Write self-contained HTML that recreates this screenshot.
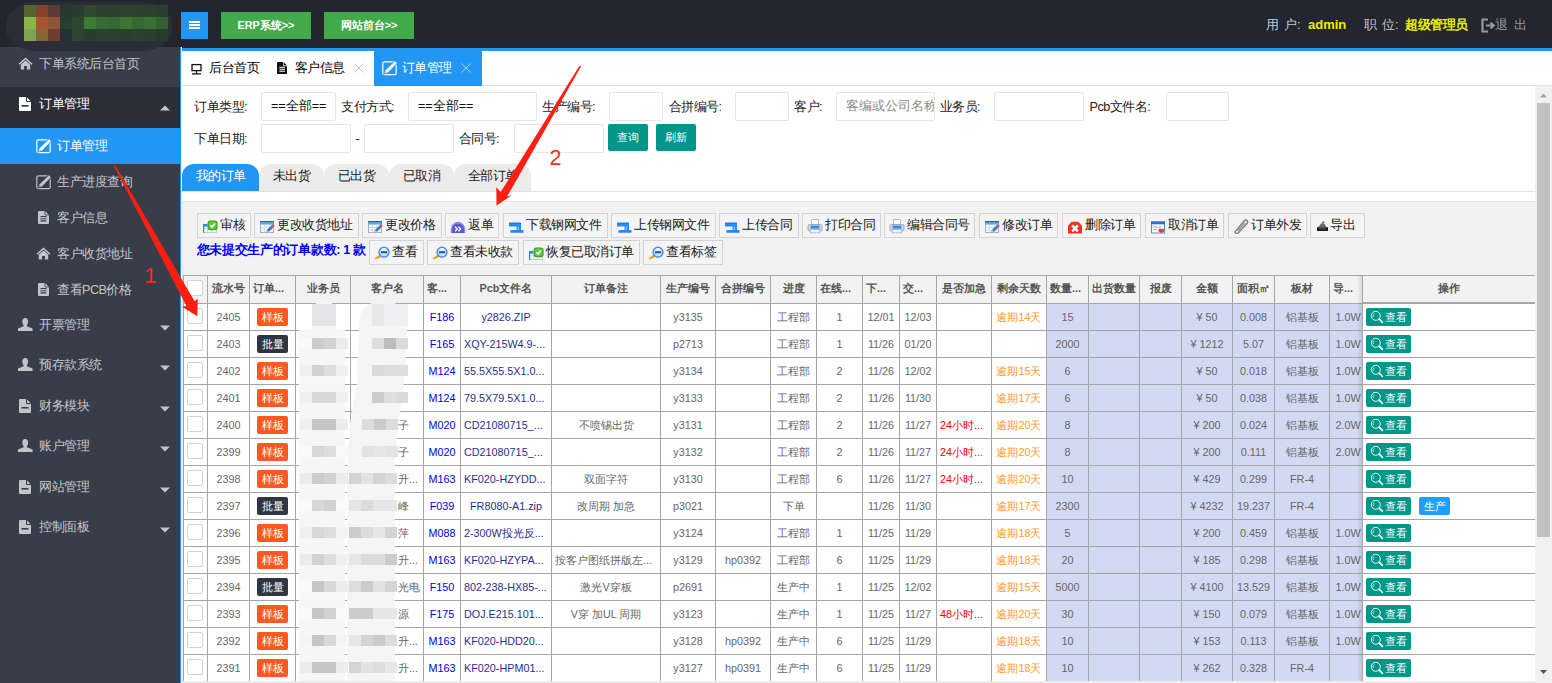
<!DOCTYPE html><html><head><meta charset="utf-8"><title>order</title><style>
*{box-sizing:border-box;margin:0;padding:0}
html,body{width:1552px;height:683px;overflow:hidden;background:#fff;font-family:"Liberation Sans", sans-serif;font-size:12.6px;color:#222}
.a{position:absolute}
.t{position:absolute;white-space:nowrap;overflow:hidden}
.c{position:absolute;white-space:nowrap;overflow:hidden;text-align:center;font-size:10.8px;color:#666}
.h{position:absolute;white-space:nowrap;overflow:hidden;text-align:center;font-size:10.8px;color:#555;font-weight:bold}
.vl{position:absolute;width:1px;background:#a6a6a6}
.hl{position:absolute;height:1px;background:#a6a6a6}
.inp{position:absolute;background:#fff;border:1px solid #e6e6e6;border-radius:2px}
.lbl{position:absolute;white-space:nowrap;letter-spacing:-0.5px;font-size:12.6px;color:#222;line-height:31px;height:30px}
.tb{position:absolute;letter-spacing:-0.5px;height:25px;border:1px solid #d3d3d3;background:#f4f4f4;white-space:nowrap;font-size:12.6px;line-height:22px;color:#222}
.tb span{position:absolute;top:0}
.st{position:absolute;letter-spacing:-0.5px;top:164px;height:27px;border-radius:12px 12px 0 0;background:#ebebeb;text-align:center;line-height:25px;font-size:12.6px;color:#222}
.bd{position:absolute;height:18px;width:31px;border-radius:2px;color:#fff;font-size:10.8px;line-height:18px;text-align:center}
.ck{position:absolute;width:16px;height:16px;border:1px solid #d2d2d2;border-radius:2px;background:#fff}
.vb{position:absolute;height:18px;border-radius:2px;color:#fff;font-size:10.8px;line-height:18px}
.sm{position:absolute;white-space:nowrap;letter-spacing:-0.5px;font-size:12.6px;height:20px;line-height:20px}
</style></head><body>
<div class="a" style="left:0;top:0;width:1552px;height:47px;background:#23262e"></div>
<div class="a" style="left:0;top:47px;width:180px;height:636px;background:#393d49"></div>
<div class="a" style="left:6px;top:2px;width:166px;height:49px;border-radius:30px/22px;background:#2b2e39"></div>
<div class="a" style="left:24px;top:5px;width:12px;height:12px;background:#54652f"></div>
<div class="a" style="left:36px;top:5px;width:12px;height:12px;background:#86422e"></div>
<div class="a" style="left:48px;top:5px;width:12px;height:12px;background:#5e3a36"></div>
<div class="a" style="left:60px;top:5px;width:12px;height:12px;background:#26382f"></div>
<div class="a" style="left:72px;top:5px;width:12px;height:12px;background:#283e30"></div>
<div class="a" style="left:84px;top:5px;width:12px;height:12px;background:#2e4a30"></div>
<div class="a" style="left:96px;top:5px;width:12px;height:12px;background:#2a4230"></div>
<div class="a" style="left:108px;top:5px;width:12px;height:12px;background:#2a4230"></div>
<div class="a" style="left:120px;top:5px;width:12px;height:12px;background:#2b4430"></div>
<div class="a" style="left:132px;top:5px;width:12px;height:12px;background:#2a4230"></div>
<div class="a" style="left:144px;top:5px;width:12px;height:12px;background:#2a4230"></div>
<div class="a" style="left:156px;top:5px;width:12px;height:12px;background:#293f30"></div>
<div class="a" style="left:24px;top:17px;width:12px;height:12px;background:#8bb348"></div>
<div class="a" style="left:36px;top:17px;width:12px;height:12px;background:#a65434"></div>
<div class="a" style="left:48px;top:17px;width:12px;height:12px;background:#8f5538"></div>
<div class="a" style="left:60px;top:17px;width:12px;height:12px;background:#283e30"></div>
<div class="a" style="left:72px;top:17px;width:12px;height:12px;background:#2c4630"></div>
<div class="a" style="left:84px;top:17px;width:12px;height:12px;background:#3e7c34"></div>
<div class="a" style="left:96px;top:17px;width:12px;height:12px;background:#386c34"></div>
<div class="a" style="left:108px;top:17px;width:12px;height:12px;background:#366834"></div>
<div class="a" style="left:120px;top:17px;width:12px;height:12px;background:#3c7434"></div>
<div class="a" style="left:132px;top:17px;width:12px;height:12px;background:#366834"></div>
<div class="a" style="left:144px;top:17px;width:12px;height:12px;background:#3a7034"></div>
<div class="a" style="left:156px;top:17px;width:12px;height:12px;background:#346032"></div>
<div class="a" style="left:24px;top:29px;width:12px;height:12px;background:#7ea652"></div>
<div class="a" style="left:36px;top:29px;width:12px;height:12px;background:#866838"></div>
<div class="a" style="left:48px;top:29px;width:12px;height:12px;background:#6e3e30"></div>
<div class="a" style="left:60px;top:29px;width:12px;height:12px;background:#243230"></div>
<div class="a" style="left:72px;top:29px;width:12px;height:12px;background:#2c4430"></div>
<div class="a" style="left:84px;top:29px;width:12px;height:12px;background:#283e30"></div>
<div class="a" style="left:96px;top:29px;width:12px;height:12px;background:#2a4230"></div>
<div class="a" style="left:108px;top:29px;width:12px;height:12px;background:#2a4230"></div>
<div class="a" style="left:120px;top:29px;width:12px;height:12px;background:#294030"></div>
<div class="a" style="left:132px;top:29px;width:12px;height:12px;background:#2a4230"></div>
<div class="a" style="left:144px;top:29px;width:12px;height:12px;background:#293f30"></div>
<div class="a" style="left:156px;top:29px;width:12px;height:12px;background:#283a30"></div>
<div class="a" style="left:181px;top:12px;width:27px;height:27px;background:#2296f1"></div>
<div class="a" style="left:189px;top:21px;width:11px;height:2px;background:#fff"></div>
<div class="a" style="left:189px;top:24px;width:11px;height:2px;background:#fff"></div>
<div class="a" style="left:189px;top:27px;width:11px;height:2px;background:#fff"></div>
<div class="a" style="left:221px;top:12px;width:90px;height:27px;background:#43aa4b;color:#fff;font-weight:bold;font-size:10.8px;line-height:27px;text-align:center">ERP系统&gt;&gt;</div>
<div class="a" style="left:324px;top:12px;width:90px;height:27px;background:#43aa4b;color:#fff;font-weight:bold;font-size:10.8px;line-height:27px;text-align:center">网站前台&gt;&gt;</div>
<div class="t" style="left:1266px;top:15px;height:20px;line-height:20px;font-size:13px;color:#c9c9c9;letter-spacing:0.5px">用 户:</div>
<div class="t" style="left:1308px;top:15px;height:20px;line-height:20px;font-size:13px;color:#eeee00;font-weight:bold">admin</div>
<div class="t" style="left:1364px;top:15px;height:20px;line-height:20px;font-size:13px;color:#c9c9c9;letter-spacing:0.5px">职 位:</div>
<div class="t" style="left:1405px;top:15px;height:20px;line-height:20px;font-size:12.6px;letter-spacing:-0.4px;color:#eeee00;font-weight:bold">超级管理员</div>
<svg class="a" style="left:1481px;top:18px" width="15" height="15" viewBox="0 0 15 15"><path d="M7 1.5H1.5V13.5H7" fill="none" stroke="#999" stroke-width="2.2"/><path d="M5 7.5H12M9.5 4.5L12.8 7.5L9.5 10.5" fill="none" stroke="#999" stroke-width="2"/></svg>
<div class="t" style="left:1495px;top:15px;height:20px;line-height:20px;font-size:13px;color:#999;letter-spacing:1px">退 出</div>
<div class="a" style="left:182px;top:47px;width:1370px;height:4px;background:linear-gradient(to bottom,#23262e 0,#23262e 0.7px,#2196F3 0.7px,#2196F3 3.7px,#fff 3.7px)"></div>
<div class="a" style="left:180px;top:47px;width:1px;height:636px;background:#2196F3"></div>
<svg class="a" style="left:18px;top:57px" width="15" height="13" viewBox="0 0 15 13"><path d="M7.5 0.5L0.5 6.8L1.6 7.8L7.5 2.6L13.4 7.8L14.5 6.8Z" fill="#c3c4c8"/><path d="M2.8 7.6L7.5 3.6L12.2 7.6V12.5H8.9V9H6.1V12.5H2.8Z" fill="#c3c4c8"/></svg>
<div class="sm" style="left:39px;top:54px;color:#c3c4c8">下单系统后台首页</div>
<div class="a" style="left:0;top:87px;width:180px;height:41px;background:#2c2f38"></div>
<svg class="a" style="left:19px;top:97px" width="12" height="14" viewBox="0 0 12 14"><path d="M1 0H7.5L12 4.5V13Q12 14 11 14H1Q0 14 0 13V1Q0 0 1 0Z" fill="#fff"/><path d="M7.5 0V4.5H12" fill="none" stroke="#2c2f38" stroke-width="1"/><rect x="2.5" y="8" width="7" height="1.6" fill="#2c2f38"/></svg>
<div class="sm" style="left:39px;top:94px;color:#fff">订单管理</div>
<svg class="a" style="left:0;top:0" width="180" height="683"><polygon points="160,110.5 170,110.5 165,105.5" fill="#c9c9cc"/></svg>
<div class="a" style="left:0;top:128px;width:180px;height:36px;background:#2196F3"></div>
<svg class="a" style="left:36px;top:139px" width="16" height="15" viewBox="0 0 16 15"><rect x="0.8" y="0.9" width="13.4" height="12.8" rx="1.6" fill="none" stroke="#fff" stroke-width="1.2"/><path d="M12.9 0.2L15 2.3L5.6 11.7L2.5 12.6L3.4 9.6Z" fill="#2196F3" stroke="#2196F3" stroke-width="1.6"/><path d="M12.9 0.2L15 2.3L5.6 11.7L2.5 12.6L3.4 9.6Z" fill="#fff"/><circle cx="4" cy="11" r="0.6" fill="#2196F3"/></svg>
<div class="sm" style="left:57px;top:136px;color:#fff">订单管理</div>
<svg class="a" style="left:36px;top:175px" width="16" height="15" viewBox="0 0 16 15"><rect x="0.8" y="0.9" width="13.4" height="12.8" rx="1.6" fill="none" stroke="#c3c4c8" stroke-width="1.2"/><path d="M12.9 0.2L15 2.3L5.6 11.7L2.5 12.6L3.4 9.6Z" fill="#393d49" stroke="#393d49" stroke-width="1.6"/><path d="M12.9 0.2L15 2.3L5.6 11.7L2.5 12.6L3.4 9.6Z" fill="#c3c4c8"/><circle cx="4" cy="11" r="0.6" fill="#393d49"/></svg>
<div class="sm" style="left:57px;top:172px;color:#c3c4c8">生产进度查询</div>
<svg class="a" style="left:38px;top:211px" width="11" height="13" viewBox="0 0 11 13"><path d="M1 0H7L11 4V12Q11 13 10 13H1Q0 13 0 12V1Q0 0 1 0Z" fill="#c3c4c8"/><path d="M2.5 5.5H8.5M2.5 7.7H8.5M2.5 9.9H8.5" stroke="#393d49" stroke-width="1.1"/><path d="M7 0V4H11" fill="none" stroke="#393d49" stroke-width="0.8"/></svg>
<div class="sm" style="left:57px;top:208px;color:#c3c4c8">客户信息</div>
<svg class="a" style="left:36px;top:247px" width="15" height="13" viewBox="0 0 15 13"><path d="M7.5 0.5L0.5 6.8L1.6 7.8L7.5 2.6L13.4 7.8L14.5 6.8Z" fill="#c3c4c8"/><path d="M2.8 7.6L7.5 3.6L12.2 7.6V12.5H8.9V9H6.1V12.5H2.8Z" fill="#c3c4c8"/></svg>
<div class="sm" style="left:57px;top:244px;color:#c3c4c8">客户收货地址</div>
<svg class="a" style="left:38px;top:283px" width="11" height="13" viewBox="0 0 11 13"><path d="M1 0H7L11 4V12Q11 13 10 13H1Q0 13 0 12V1Q0 0 1 0Z" fill="#c3c4c8"/><path d="M2.5 5.5H8.5M2.5 7.7H8.5M2.5 9.9H8.5" stroke="#393d49" stroke-width="1.1"/><path d="M7 0V4H11" fill="none" stroke="#393d49" stroke-width="0.8"/></svg>
<div class="sm" style="left:57px;top:280px;color:#c3c4c8">查看PCB价格</div>
<svg class="a" style="left:18px;top:318px" width="15" height="13" viewBox="0 0 15 13"><ellipse cx="7.2" cy="3.7" rx="2.9" ry="3.7" fill="#c3c4c8"/><path d="M5.6 6.2H8.8V8.2L14.6 10.6V13H-0.2V10.6L5.6 8.2Z" fill="#c3c4c8"/></svg>
<div class="sm" style="left:39px;top:315px;color:#c3c4c8">开票管理</div>
<svg class="a" style="left:0;top:0" width="180" height="683"><polygon points="160,325.5 170,325.5 165,330.5" fill="#c3c4c8"/></svg>
<svg class="a" style="left:18px;top:358px" width="15" height="13" viewBox="0 0 15 13"><ellipse cx="7.2" cy="3.7" rx="2.9" ry="3.7" fill="#c3c4c8"/><path d="M5.6 6.2H8.8V8.2L14.6 10.6V13H-0.2V10.6L5.6 8.2Z" fill="#c3c4c8"/></svg>
<div class="sm" style="left:39px;top:355px;color:#c3c4c8">预存款系统</div>
<svg class="a" style="left:0;top:0" width="180" height="683"><polygon points="160,365.5 170,365.5 165,370.5" fill="#c3c4c8"/></svg>
<svg class="a" style="left:19px;top:399px" width="12" height="14" viewBox="0 0 12 14"><path d="M1 0H7.5L12 4.5V13Q12 14 11 14H1Q0 14 0 13V1Q0 0 1 0Z" fill="#c3c4c8"/><path d="M7.5 0V4.5H12" fill="none" stroke="#393d49" stroke-width="1"/><rect x="2.5" y="8" width="7" height="1.6" fill="#393d49"/></svg>
<div class="sm" style="left:39px;top:396px;color:#c3c4c8">财务模块</div>
<svg class="a" style="left:0;top:0" width="180" height="683"><polygon points="160,406.5 170,406.5 165,411.5" fill="#c3c4c8"/></svg>
<svg class="a" style="left:18px;top:439px" width="15" height="13" viewBox="0 0 15 13"><ellipse cx="7.2" cy="3.7" rx="2.9" ry="3.7" fill="#c3c4c8"/><path d="M5.6 6.2H8.8V8.2L14.6 10.6V13H-0.2V10.6L5.6 8.2Z" fill="#c3c4c8"/></svg>
<div class="sm" style="left:39px;top:436px;color:#c3c4c8">账户管理</div>
<svg class="a" style="left:0;top:0" width="180" height="683"><polygon points="160,446.5 170,446.5 165,451.5" fill="#c3c4c8"/></svg>
<svg class="a" style="left:19px;top:480px" width="12" height="14" viewBox="0 0 12 14"><path d="M1 0H7.5L12 4.5V13Q12 14 11 14H1Q0 14 0 13V1Q0 0 1 0Z" fill="#c3c4c8"/><path d="M7.5 0V4.5H12" fill="none" stroke="#393d49" stroke-width="1"/><rect x="2.5" y="8" width="7" height="1.6" fill="#393d49"/></svg>
<div class="sm" style="left:39px;top:477px;color:#c3c4c8">网站管理</div>
<svg class="a" style="left:0;top:0" width="180" height="683"><polygon points="160,487.5 170,487.5 165,492.5" fill="#c3c4c8"/></svg>
<svg class="a" style="left:19px;top:520px" width="12" height="14" viewBox="0 0 12 14"><path d="M1 0H7.5L12 4.5V13Q12 14 11 14H1Q0 14 0 13V1Q0 0 1 0Z" fill="#c3c4c8"/><path d="M7.5 0V4.5H12" fill="none" stroke="#393d49" stroke-width="1"/><rect x="2.5" y="8" width="7" height="1.6" fill="#393d49"/></svg>
<div class="sm" style="left:39px;top:517px;color:#c3c4c8">控制面板</div>
<svg class="a" style="left:0;top:0" width="180" height="683"><polygon points="160,527.5 170,527.5 165,532.5" fill="#c3c4c8"/></svg>
<div class="a" style="left:182px;top:85px;width:1370px;height:1px;background:#e2e2e2"></div>
<svg class="a" style="left:191px;top:63px" width="11" height="12" viewBox="0 0 11 12"><rect x="1" y="1.6" width="9" height="6" fill="none" stroke="#111" stroke-width="1.3"/><path d="M5.5 8V10.5M1 10.8H10" stroke="#111" stroke-width="1.3"/></svg>
<div class="sm" style="left:209px;top:58px;color:#000">后台首页</div>
<svg class="a" style="left:277px;top:62px" width="10.4" height="12.2" viewBox="0 0 11 13"><path d="M1 0H7L11 4V12Q11 13 10 13H1Q0 13 0 12V1Q0 0 1 0Z" fill="#111"/><path d="M2.5 5.5H8.5M2.5 7.7H8.5M2.5 9.9H8.5" stroke="#fff" stroke-width="1.1"/><path d="M7 0V4H11" fill="none" stroke="#fff" stroke-width="0.8"/></svg>
<div class="sm" style="left:294.5px;top:58px;color:#000">客户信息</div>
<svg class="a" style="left:354px;top:63px" width="10" height="10" viewBox="0 0 10 10"><path d="M0.5 0.5L9.5 9.5M9.5 0.5L0.5 9.5" stroke="#c2c2c2" stroke-width="1"/></svg>
<div class="a" style="left:374px;top:50px;width:108px;height:36px;background:#2196F3"></div>
<svg class="a" style="left:382px;top:61px" width="16" height="15" viewBox="0 0 16 15"><rect x="0.8" y="0.9" width="13.4" height="12.8" rx="1.6" fill="none" stroke="#fff" stroke-width="1.2"/><path d="M12.9 0.2L15 2.3L5.6 11.7L2.5 12.6L3.4 9.6Z" fill="#2196F3" stroke="#2196F3" stroke-width="1.6"/><path d="M12.9 0.2L15 2.3L5.6 11.7L2.5 12.6L3.4 9.6Z" fill="#fff"/><circle cx="4" cy="11" r="0.6" fill="#2196F3"/></svg>
<div class="sm" style="left:401.5px;top:58px;color:#fff">订单管理</div>
<svg class="a" style="left:461px;top:63px" width="10" height="10" viewBox="0 0 10 10"><path d="M0.5 0.5L9.5 9.5M9.5 0.5L0.5 9.5" stroke="#a8d4fa" stroke-width="1"/></svg>
<div class="a" style="left:1535px;top:86px;width:17px;height:597px;background:#f1f1f1"></div>
<div class="a" style="left:1537px;top:103px;width:13px;height:434px;background:#c1c1c1"></div>
<svg class="a" style="left:1535px;top:86px" width="17" height="597"><polygon points="5,11.5 12,11.5 8.5,7.5" fill="#a3a3a3"/><polygon points="5,584 12,584 8.5,588" fill="#505050"/></svg>
<div class="lbl" style="left:194px;top:92px">订单类型:</div>
<div class="inp" style="left:261px;top:92px;width:75px;height:29px;line-height:27px;padding-left:9px;font-size:12.6px;color:#111;white-space:nowrap;overflow:hidden">==全部==</div>
<div class="lbl" style="left:341px;top:92px">支付方式:</div>
<div class="inp" style="left:408px;top:92px;width:129px;height:29px;line-height:27px;padding-left:9px;font-size:12.6px;color:#111;white-space:nowrap;overflow:hidden">==全部==</div>
<div class="lbl" style="left:542px;top:92px">生产编号:</div>
<div class="inp" style="left:609px;top:92px;width:54px;height:29px"></div>
<div class="lbl" style="left:668.5px;top:92px">合拼编号:</div>
<div class="inp" style="left:735px;top:92px;width:54px;height:29px"></div>
<div class="lbl" style="left:794px;top:92px">客户:</div>
<div class="inp" style="left:836px;top:92px;width:99px;height:29px;line-height:27px;padding-left:9px;font-size:12.6px;color:#8a8a8a;white-space:nowrap;overflow:hidden">客编或公司名称</div>
<div class="lbl" style="left:939.5px;top:92px">业务员:</div>
<div class="inp" style="left:994px;top:92px;width:90px;height:29px"></div>
<div class="lbl" style="left:1089.5px;top:92px">Pcb文件名:</div>
<div class="inp" style="left:1166px;top:92px;width:63px;height:29px"></div>
<div class="lbl" style="left:194px;top:124px">下单日期:</div>
<div class="inp" style="left:261px;top:124px;width:90px;height:29px"></div>
<div class="lbl" style="left:355.5px;top:124px">-</div>
<div class="inp" style="left:364px;top:124px;width:90px;height:29px"></div>
<div class="lbl" style="left:458.5px;top:124px">合同号:</div>
<div class="inp" style="left:514px;top:124px;width:90px;height:29px"></div>
<div class="a" style="left:608px;top:124px;width:40px;height:27px;background:#009688;border-radius:2px;color:#fff;font-size:10.8px;line-height:27px;text-align:center">查询</div>
<div class="a" style="left:656px;top:124px;width:40px;height:27px;background:#009688;border-radius:2px;color:#fff;font-size:10.8px;line-height:27px;text-align:center">刷新</div>
<div class="a" style="left:182px;top:191px;width:1353px;height:1px;background:#e2e2e2"></div>
<div class="st" style="left:182px;width:77px;background:#2196F3;color:#fff">我的订单</div>
<div class="st" style="left:259.4px;width:64.5px;">未出货</div>
<div class="st" style="left:324.3px;width:64.5px;">已出货</div>
<div class="st" style="left:389.2px;width:64.5px;">已取消</div>
<div class="st" style="left:454.1px;width:77px;">全部订单</div>
<div class="a" style="left:182px;top:201px;width:1353px;height:482px;background:#f2f2f2;border-top:1px solid #e3e3e3;border-left:1px solid #e6e6e6"></div>
<div class="tb" style="left:197px;top:213px;width:54px"><div class="a" style="left:4px;top:4px;width:16px;height:16px"><svg width="16" height="16" viewBox="0 0 16 16"><rect x="1.5" y="6.5" width="13" height="8" fill="#fbfcfe" stroke="#c3ccd9" stroke-width="1"/><path d="M1.5 10.5H14.5M5.5 8V14.5M10 8V14.5" stroke="#d3dae5" stroke-width="1"/><rect x="1" y="6" width="4.5" height="2.6" fill="#2f86e6"/><rect x="1" y="6" width="1.2" height="9" fill="#3f7fd0"/><rect x="5.6" y="2.6" width="10" height="9.6" rx="2.6" fill="#3ba628"/><rect x="6.8" y="3.6" width="7.6" height="7.4" rx="2" fill="#63c83c"/><path d="M8.4 7.3L10 9L13 5.4" fill="none" stroke="#fff" stroke-width="1.5"/></svg></div><span style="left:22px">审核</span></div>
<div class="tb" style="left:254px;top:213px;width:105px"><div class="a" style="left:4px;top:4px;width:16px;height:16px"><svg width="16" height="16" viewBox="0 0 16 16"><rect x="1.5" y="3.5" width="13" height="11" fill="#fff" stroke="#9fb0c8" stroke-width="1"/><rect x="1" y="3" width="14" height="1.6" fill="#1f5fc4"/><rect x="1" y="4.6" width="14" height="2" fill="#59a5f2"/><path d="M2 9.5H14.5M2 12H14.5M5.5 6.6V14.5M10 6.6V14.5" stroke="#d0d8e4" stroke-width="1"/><path d="M7.2 14.6L8 11.8L12.6 7.2L14.6 9.2L10 13.8Z" fill="#3a78d8"/><path d="M12.6 7.2L13.8 6L15.8 8L14.6 9.2Z" fill="#e8433a"/><path d="M7.2 14.6L8 11.8L10 13.8Z" fill="#f0c070"/></svg></div><span style="left:22px">更改收货地址</span></div>
<div class="tb" style="left:362px;top:213px;width:80px"><div class="a" style="left:4px;top:4px;width:16px;height:16px"><svg width="16" height="16" viewBox="0 0 16 16"><rect x="1.5" y="3.5" width="13" height="11" fill="#fff" stroke="#9fb0c8" stroke-width="1"/><rect x="1" y="3" width="14" height="1.6" fill="#1f5fc4"/><rect x="1" y="4.6" width="14" height="2" fill="#59a5f2"/><path d="M2 9.5H14.5M2 12H14.5M5.5 6.6V14.5M10 6.6V14.5" stroke="#d0d8e4" stroke-width="1"/><path d="M7.2 14.6L8 11.8L12.6 7.2L14.6 9.2L10 13.8Z" fill="#3a78d8"/><path d="M12.6 7.2L13.8 6L15.8 8L14.6 9.2Z" fill="#e8433a"/><path d="M7.2 14.6L8 11.8L10 13.8Z" fill="#f0c070"/></svg></div><span style="left:22px">更改价格</span></div>
<div class="tb" style="left:445px;top:213px;width:54px"><div class="a" style="left:4px;top:4px;width:16px;height:16px"><svg width="16" height="16" viewBox="0 0 16 16"><path d="M0.8 15V11A7.2 7.2 0 0 1 15.2 11V15Z" fill="#8c8cec"/><path d="M2.2 15V11.2A5.8 5.8 0 0 1 13.8 11.2V15Z" fill="#5a56cc"/><path d="M5 8.6L7.2 11L5 13.4M8.4 8.6L10.6 11L8.4 13.4" fill="none" stroke="#fff" stroke-width="1.4"/></svg></div><span style="left:22px">返单</span></div>
<div class="tb" style="left:503px;top:213px;width:105px"><div class="a" style="left:4px;top:4px;width:16px;height:16px"><svg width="16" height="16" viewBox="0 0 16 16"><path d="M1 4.7H13V12H15.4V14.5H2.6V12H8.5V8.4H1Z" fill="#1e90ff"/><path d="M1 4.7H13V5.7H1Z" fill="#1673e0"/><path d="M9.6 8.4H11V12H9.6Z" fill="#7cc0ff"/><path d="M2.6 13.6H15.4V14.5H2.6Z" fill="#2a7ae0"/></svg></div><span style="left:22px">下载钢网文件</span></div>
<div class="tb" style="left:611px;top:213px;width:105px"><div class="a" style="left:4px;top:4px;width:16px;height:16px"><svg width="16" height="16" viewBox="0 0 16 16"><path d="M1 4.7H13V12H15.4V14.5H2.6V12H8.5V8.4H1Z" fill="#1e90ff"/><path d="M1 4.7H13V5.7H1Z" fill="#1673e0"/><path d="M9.6 8.4H11V12H9.6Z" fill="#7cc0ff"/><path d="M2.6 13.6H15.4V14.5H2.6Z" fill="#2a7ae0"/></svg></div><span style="left:22px">上传钢网文件</span></div>
<div class="tb" style="left:719px;top:213px;width:80px"><div class="a" style="left:4px;top:4px;width:16px;height:16px"><svg width="16" height="16" viewBox="0 0 16 16"><path d="M1 4.7H13V12H15.4V14.5H2.6V12H8.5V8.4H1Z" fill="#1e90ff"/><path d="M1 4.7H13V5.7H1Z" fill="#1673e0"/><path d="M9.6 8.4H11V12H9.6Z" fill="#7cc0ff"/><path d="M2.6 13.6H15.4V14.5H2.6Z" fill="#2a7ae0"/></svg></div><span style="left:22px">上传合同</span></div>
<div class="tb" style="left:802px;top:213px;width:79px"><div class="a" style="left:4px;top:4px;width:16px;height:16px"><svg width="16" height="16" viewBox="0 0 16 16"><rect x="4.5" y="1.5" width="7" height="6" fill="#fff" stroke="#b4b8c0" stroke-width="1"/><rect x="1" y="6.5" width="14" height="6.5" rx="1.6" fill="#d3d8e2" stroke="#a2a8b4" stroke-width="1"/><rect x="3.6" y="7.6" width="8.8" height="3" fill="#1e90ff"/><rect x="3.2" y="11.4" width="9.6" height="3.4" fill="#f4f5f8" stroke="#a8adb8" stroke-width="0.8"/></svg></div><span style="left:22px">打印合同</span></div>
<div class="tb" style="left:884px;top:213px;width:91px"><div class="a" style="left:4px;top:4px;width:16px;height:16px"><svg width="16" height="16" viewBox="0 0 16 16"><rect x="4.5" y="1.5" width="7" height="6" fill="#fff" stroke="#b4b8c0" stroke-width="1"/><rect x="1" y="6.5" width="14" height="6.5" rx="1.6" fill="#d3d8e2" stroke="#a2a8b4" stroke-width="1"/><rect x="3.6" y="7.6" width="8.8" height="3" fill="#1e90ff"/><rect x="3.2" y="11.4" width="9.6" height="3.4" fill="#f4f5f8" stroke="#a8adb8" stroke-width="0.8"/></svg></div><span style="left:22px">编辑合同号</span></div>
<div class="tb" style="left:979px;top:213px;width:79px"><div class="a" style="left:4px;top:4px;width:16px;height:16px"><svg width="16" height="16" viewBox="0 0 16 16"><rect x="1.5" y="3.5" width="13" height="11" fill="#fff" stroke="#9fb0c8" stroke-width="1"/><rect x="1" y="3" width="14" height="1.6" fill="#1f5fc4"/><rect x="1" y="4.6" width="14" height="2" fill="#59a5f2"/><path d="M2 9.5H14.5M2 12H14.5M5.5 6.6V14.5M10 6.6V14.5" stroke="#d0d8e4" stroke-width="1"/><path d="M7.2 14.6L8 11.8L12.6 7.2L14.6 9.2L10 13.8Z" fill="#3a78d8"/><path d="M12.6 7.2L13.8 6L15.8 8L14.6 9.2Z" fill="#e8433a"/><path d="M7.2 14.6L8 11.8L10 13.8Z" fill="#f0c070"/></svg></div><span style="left:22px">修改订单</span></div>
<div class="tb" style="left:1062px;top:213px;width:79px"><div class="a" style="left:4px;top:4px;width:16px;height:16px"><svg width="16" height="16" viewBox="0 0 16 16"><path d="M1 15.5V8L4.5 3.8H11.5L15 8V15.5Z" fill="#ea3420"/><path d="M5.2 7.4L10.8 13.4M10.8 7.4L5.2 13.4" stroke="#fff" stroke-width="2.3"/></svg></div><span style="left:22px">删除订单</span></div>
<div class="tb" style="left:1145px;top:213px;width:79px"><div class="a" style="left:4px;top:4px;width:16px;height:16px"><svg width="16" height="16" viewBox="0 0 16 16"><rect x="1.5" y="4" width="13" height="11" fill="#f6f9ff" stroke="#5f86c8" stroke-width="1"/><rect x="1" y="3.5" width="14" height="2.8" fill="#2f6fd0"/><path d="M3.5 9H7M3.5 11.5H6.5M8.5 9H11" stroke="#8fa2c4" stroke-width="1.2"/><path d="M8.6 11.4Q10 9.8 11.3 11.4Q12.6 9.8 14 11.4Q15 13.4 11.3 15Q7.6 13.4 8.6 11.4Z" fill="#e8402c"/></svg></div><span style="left:22px">取消订单</span></div>
<div class="tb" style="left:1228px;top:213px;width:79px"><div class="a" style="left:4px;top:4px;width:16px;height:16px"><svg width="16" height="16" viewBox="0 0 16 16"><path d="M2.2 13.6L11.4 2.6Q12.8 1.4 14.2 2.8Q15.2 4.2 14 5.6L5 15Q3.6 15.8 2.6 14.8Q1.8 14 2.2 13.6Z" fill="none" stroke="#7c7c86" stroke-width="1.4"/><path d="M4.6 12.8L12 4.6M6.4 13.6L13.4 6" stroke="#8a8a94" stroke-width="1.3"/></svg></div><span style="left:22px">订单外发</span></div>
<div class="tb" style="left:1310px;top:213px;width:55px"><div class="a" style="left:5px;top:6px;width:16px;height:16px"><svg width="16" height="16" viewBox="0 0 16 16"><rect x="1" y="7.2" width="11" height="3.8" fill="#1c1c1c"/><path d="M2.2 7.2L5 3.6H8.4L10.6 7.2Z" fill="#6a6a6a"/><path d="M6 3.4L8.2 1.6" stroke="#d8402c" stroke-width="1.4"/><rect x="3" y="8.4" width="7" height="1" fill="#555"/></svg></div><span style="left:19px">导出</span></div>
<div class="t" style="left:196.5px;top:240px;height:25px;line-height:21px;font-size:12.6px;letter-spacing:-0.3px;font-weight:bold;color:#0000ff">您未提交生产的订单款数: 1 款</div>
<div class="tb" style="left:369px;top:240px;width:55px"><div class="a" style="left:4px;top:4px;width:16px;height:16px"><svg width="16" height="16" viewBox="0 0 16 16"><path d="M0.6 13.4L6 9.2L7.8 11.8L1.6 14.6Z" fill="#dca41e"/><path d="M0.8 13.3L6 9.4" stroke="#f2cc58" stroke-width="0.9"/><circle cx="10" cy="7.2" r="4.9" fill="#bfe2ff" stroke="#4f8ee0" stroke-width="1.5"/><circle cx="10" cy="5.6" r="2.6" fill="#e6f4ff"/><path d="M7 7.2H13" stroke="#1a44b0" stroke-width="1.9"/></svg></div><span style="left:22px">查看</span></div>
<div class="tb" style="left:427px;top:240px;width:92px"><div class="a" style="left:4px;top:4px;width:16px;height:16px"><svg width="16" height="16" viewBox="0 0 16 16"><path d="M0.6 13.4L6 9.2L7.8 11.8L1.6 14.6Z" fill="#dca41e"/><path d="M0.8 13.3L6 9.4" stroke="#f2cc58" stroke-width="0.9"/><circle cx="10" cy="7.2" r="4.9" fill="#bfe2ff" stroke="#4f8ee0" stroke-width="1.5"/><circle cx="10" cy="5.6" r="2.6" fill="#e6f4ff"/><path d="M7 7.2H13" stroke="#1a44b0" stroke-width="1.9"/></svg></div><span style="left:22px">查看未收款</span></div>
<div class="tb" style="left:523px;top:240px;width:117px"><div class="a" style="left:4px;top:4px;width:16px;height:16px"><svg width="16" height="16" viewBox="0 0 16 16"><rect x="1.5" y="6.5" width="13" height="8" fill="#fbfcfe" stroke="#c3ccd9" stroke-width="1"/><path d="M1.5 10.5H14.5M5.5 8V14.5M10 8V14.5" stroke="#d3dae5" stroke-width="1"/><rect x="1" y="6" width="4.5" height="2.6" fill="#2f86e6"/><rect x="1" y="6" width="1.2" height="9" fill="#3f7fd0"/><rect x="5.6" y="2.6" width="10" height="9.6" rx="2.6" fill="#3ba628"/><rect x="6.8" y="3.6" width="7.6" height="7.4" rx="2" fill="#63c83c"/><path d="M8.4 7.3L10 9L13 5.4" fill="none" stroke="#fff" stroke-width="1.5"/></svg></div><span style="left:22px">恢复已取消订单</span></div>
<div class="tb" style="left:643px;top:240px;width:80px"><div class="a" style="left:4px;top:4px;width:16px;height:16px"><svg width="16" height="16" viewBox="0 0 16 16"><path d="M0.6 13.4L6 9.2L7.8 11.8L1.6 14.6Z" fill="#dca41e"/><path d="M0.8 13.3L6 9.4" stroke="#f2cc58" stroke-width="0.9"/><circle cx="10" cy="7.2" r="4.9" fill="#bfe2ff" stroke="#4f8ee0" stroke-width="1.5"/><circle cx="10" cy="5.6" r="2.6" fill="#e6f4ff"/><path d="M7 7.2H13" stroke="#1a44b0" stroke-width="1.9"/></svg></div><span style="left:22px">查看标签</span></div>
<div class="a" style="left:183px;top:275px;width:1179px;height:28px;background:#f2f2f2"></div>
<div class="a" style="left:183px;top:303px;width:1179px;height:380px;background:#fff"></div>
<div class="a" style="left:1047px;top:304px;width:315px;height:380px;background:#d2d9f3"></div>
<div class="ck" style="left:187px;top:280px"></div>
<div class="h" style="left:208px;top:276px;width:41px;height:27px;line-height:25px;">流水号</div>
<div class="h" style="left:250px;top:276px;width:45px;height:27px;line-height:25px;text-align:left;padding-left:3px;">订单...</div>
<div class="h" style="left:296px;top:276px;width:54px;height:27px;line-height:25px;">业务员</div>
<div class="h" style="left:351px;top:276px;width:72px;height:27px;line-height:25px;">客户名</div>
<div class="h" style="left:424px;top:276px;width:36px;height:27px;line-height:25px;text-align:left;padding-left:3px;">客...</div>
<div class="h" style="left:461px;top:276px;width:90px;height:27px;line-height:25px;">Pcb文件名</div>
<div class="h" style="left:552px;top:276px;width:108px;height:27px;line-height:25px;">订单备注</div>
<div class="h" style="left:661px;top:276px;width:54px;height:27px;line-height:25px;">生产编号</div>
<div class="h" style="left:716px;top:276px;width:54px;height:27px;line-height:25px;">合拼编号</div>
<div class="h" style="left:771px;top:276px;width:45px;height:27px;line-height:25px;">进度</div>
<div class="h" style="left:817px;top:276px;width:45px;height:27px;line-height:25px;text-align:left;padding-left:3px;">在线...</div>
<div class="h" style="left:863px;top:276px;width:36px;height:27px;line-height:25px;text-align:left;padding-left:3px;">下...</div>
<div class="h" style="left:900px;top:276px;width:36px;height:27px;line-height:25px;text-align:left;padding-left:3px;">交...</div>
<div class="h" style="left:937px;top:276px;width:54px;height:27px;line-height:25px;">是否加急</div>
<div class="h" style="left:992px;top:276px;width:54px;height:27px;line-height:25px;">剩余天数</div>
<div class="h" style="left:1047px;top:276px;width:41px;height:27px;line-height:25px;text-align:left;padding-left:3px;">数量...</div>
<div class="h" style="left:1089px;top:276px;width:50px;height:27px;line-height:25px;">出货数量</div>
<div class="h" style="left:1140px;top:276px;width:41px;height:27px;line-height:25px;">报废</div>
<div class="h" style="left:1182px;top:276px;width:50px;height:27px;line-height:25px;">金额</div>
<div class="h" style="left:1233px;top:276px;width:41px;height:27px;line-height:25px;">面积㎡</div>
<div class="h" style="left:1275px;top:276px;width:54px;height:27px;line-height:25px;">板材</div>
<div class="h" style="left:1330px;top:276px;width:45px;height:27px;line-height:25px;text-align:left;padding-left:3px;">导...</div>
<div class="ck" style="left:187px;top:308px"></div>
<div class="c" style="left:208px;top:304px;width:41px;height:26px;line-height:27px;">2405</div>
<div class="bd" style="left:257px;top:308px;background:#ff5722">样板</div>
<div class="c" style="left:424px;top:304px;width:36px;height:26px;line-height:27px;color:#0000e0;">F186</div>
<div class="c" style="left:461px;top:304px;width:90px;height:26px;line-height:27px;color:#1f2f8f;">y2826.ZIP</div>
<div class="c" style="left:661px;top:304px;width:54px;height:26px;line-height:27px;">y3135</div>
<div class="c" style="left:771px;top:304px;width:45px;height:26px;line-height:27px;">工程部</div>
<div class="c" style="left:817px;top:304px;width:45px;height:26px;line-height:27px;">1</div>
<div class="c" style="left:863px;top:304px;width:36px;height:26px;line-height:27px;">12/01</div>
<div class="c" style="left:900px;top:304px;width:36px;height:26px;line-height:27px;">12/03</div>
<div class="c" style="left:992px;top:304px;width:54px;height:26px;line-height:27px;color:#ff9a1f;">逾期14天</div>
<div class="c" style="left:1047px;top:304px;width:41px;height:26px;line-height:27px;">15</div>
<div class="c" style="left:1182px;top:304px;width:50px;height:26px;line-height:27px;">¥ 50</div>
<div class="c" style="left:1233px;top:304px;width:41px;height:26px;line-height:27px;">0.008</div>
<div class="c" style="left:1275px;top:304px;width:54px;height:26px;line-height:27px;">铝基板</div>
<div class="c" style="left:1330px;top:304px;width:32px;height:26px;line-height:27px;text-align:left;padding-left:5.5px;">1.0W</div>
<div class="ck" style="left:187px;top:335px"></div>
<div class="c" style="left:208px;top:331px;width:41px;height:26px;line-height:27px;">2403</div>
<div class="bd" style="left:257px;top:335px;background:#2f3542">批量</div>
<div class="c" style="left:424px;top:331px;width:36px;height:26px;line-height:27px;color:#0000e0;">F165</div>
<div class="c" style="left:461px;top:331px;width:90px;height:26px;line-height:27px;color:#1f2f8f;text-align:left;padding-left:3px;">XQY-215W4.9-...</div>
<div class="c" style="left:661px;top:331px;width:54px;height:26px;line-height:27px;">p2713</div>
<div class="c" style="left:771px;top:331px;width:45px;height:26px;line-height:27px;">工程部</div>
<div class="c" style="left:817px;top:331px;width:45px;height:26px;line-height:27px;">1</div>
<div class="c" style="left:863px;top:331px;width:36px;height:26px;line-height:27px;">11/26</div>
<div class="c" style="left:900px;top:331px;width:36px;height:26px;line-height:27px;">01/20</div>
<div class="c" style="left:1047px;top:331px;width:41px;height:26px;line-height:27px;">2000</div>
<div class="c" style="left:1182px;top:331px;width:50px;height:26px;line-height:27px;">¥ 1212</div>
<div class="c" style="left:1233px;top:331px;width:41px;height:26px;line-height:27px;">5.07</div>
<div class="c" style="left:1275px;top:331px;width:54px;height:26px;line-height:27px;">铝基板</div>
<div class="c" style="left:1330px;top:331px;width:32px;height:26px;line-height:27px;text-align:left;padding-left:5.5px;">1.0W</div>
<div class="ck" style="left:187px;top:362px"></div>
<div class="c" style="left:208px;top:358px;width:41px;height:26px;line-height:27px;">2402</div>
<div class="bd" style="left:257px;top:362px;background:#ff5722">样板</div>
<div class="c" style="left:424px;top:358px;width:36px;height:26px;line-height:27px;color:#0000e0;">M124</div>
<div class="c" style="left:461px;top:358px;width:90px;height:26px;line-height:27px;color:#1f2f8f;text-align:left;padding-left:3px;">55.5X55.5X1.0...</div>
<div class="c" style="left:661px;top:358px;width:54px;height:26px;line-height:27px;">y3134</div>
<div class="c" style="left:771px;top:358px;width:45px;height:26px;line-height:27px;">工程部</div>
<div class="c" style="left:817px;top:358px;width:45px;height:26px;line-height:27px;">2</div>
<div class="c" style="left:863px;top:358px;width:36px;height:26px;line-height:27px;">11/26</div>
<div class="c" style="left:900px;top:358px;width:36px;height:26px;line-height:27px;">12/02</div>
<div class="c" style="left:992px;top:358px;width:54px;height:26px;line-height:27px;color:#ff9a1f;">逾期15天</div>
<div class="c" style="left:1047px;top:358px;width:41px;height:26px;line-height:27px;">6</div>
<div class="c" style="left:1182px;top:358px;width:50px;height:26px;line-height:27px;">¥ 50</div>
<div class="c" style="left:1233px;top:358px;width:41px;height:26px;line-height:27px;">0.018</div>
<div class="c" style="left:1275px;top:358px;width:54px;height:26px;line-height:27px;">铝基板</div>
<div class="c" style="left:1330px;top:358px;width:32px;height:26px;line-height:27px;text-align:left;padding-left:5.5px;">1.0W</div>
<div class="ck" style="left:187px;top:389px"></div>
<div class="c" style="left:208px;top:385px;width:41px;height:26px;line-height:27px;">2401</div>
<div class="bd" style="left:257px;top:389px;background:#ff5722">样板</div>
<div class="c" style="left:424px;top:385px;width:36px;height:26px;line-height:27px;color:#0000e0;">M124</div>
<div class="c" style="left:461px;top:385px;width:90px;height:26px;line-height:27px;color:#1f2f8f;text-align:left;padding-left:3px;">79.5X79.5X1.0...</div>
<div class="c" style="left:661px;top:385px;width:54px;height:26px;line-height:27px;">y3133</div>
<div class="c" style="left:771px;top:385px;width:45px;height:26px;line-height:27px;">工程部</div>
<div class="c" style="left:817px;top:385px;width:45px;height:26px;line-height:27px;">2</div>
<div class="c" style="left:863px;top:385px;width:36px;height:26px;line-height:27px;">11/26</div>
<div class="c" style="left:900px;top:385px;width:36px;height:26px;line-height:27px;">11/30</div>
<div class="c" style="left:992px;top:385px;width:54px;height:26px;line-height:27px;color:#ff9a1f;">逾期17天</div>
<div class="c" style="left:1047px;top:385px;width:41px;height:26px;line-height:27px;">6</div>
<div class="c" style="left:1182px;top:385px;width:50px;height:26px;line-height:27px;">¥ 50</div>
<div class="c" style="left:1233px;top:385px;width:41px;height:26px;line-height:27px;">0.038</div>
<div class="c" style="left:1275px;top:385px;width:54px;height:26px;line-height:27px;">铝基板</div>
<div class="c" style="left:1330px;top:385px;width:32px;height:26px;line-height:27px;text-align:left;padding-left:5.5px;">1.0W</div>
<div class="ck" style="left:187px;top:416px"></div>
<div class="c" style="left:208px;top:412px;width:41px;height:26px;line-height:27px;">2400</div>
<div class="bd" style="left:257px;top:416px;background:#ff5722">样板</div>
<div class="c" style="left:351px;top:412px;width:72px;height:26px;line-height:27px;text-align:left;padding-left:47px;">子</div>
<div class="c" style="left:424px;top:412px;width:36px;height:26px;line-height:27px;color:#0000e0;">M020</div>
<div class="c" style="left:461px;top:412px;width:90px;height:26px;line-height:27px;color:#1f2f8f;text-align:left;padding-left:3px;">CD21080715_...</div>
<div class="c" style="left:552px;top:412px;width:108px;height:26px;line-height:27px;">不喷锡出货</div>
<div class="c" style="left:661px;top:412px;width:54px;height:26px;line-height:27px;">y3131</div>
<div class="c" style="left:771px;top:412px;width:45px;height:26px;line-height:27px;">工程部</div>
<div class="c" style="left:817px;top:412px;width:45px;height:26px;line-height:27px;">2</div>
<div class="c" style="left:863px;top:412px;width:36px;height:26px;line-height:27px;">11/26</div>
<div class="c" style="left:900px;top:412px;width:36px;height:26px;line-height:27px;">11/27</div>
<div class="c" style="left:937px;top:412px;width:54px;height:26px;line-height:27px;color:#ff0000;text-align:left;padding-left:3px;">24小时...</div>
<div class="c" style="left:992px;top:412px;width:54px;height:26px;line-height:27px;color:#ff9a1f;">逾期20天</div>
<div class="c" style="left:1047px;top:412px;width:41px;height:26px;line-height:27px;">8</div>
<div class="c" style="left:1182px;top:412px;width:50px;height:26px;line-height:27px;">¥ 200</div>
<div class="c" style="left:1233px;top:412px;width:41px;height:26px;line-height:27px;">0.024</div>
<div class="c" style="left:1275px;top:412px;width:54px;height:26px;line-height:27px;">铝基板</div>
<div class="c" style="left:1330px;top:412px;width:32px;height:26px;line-height:27px;text-align:left;padding-left:5.5px;">2.0W</div>
<div class="ck" style="left:187px;top:443px"></div>
<div class="c" style="left:208px;top:439px;width:41px;height:26px;line-height:27px;">2399</div>
<div class="bd" style="left:257px;top:443px;background:#ff5722">样板</div>
<div class="c" style="left:351px;top:439px;width:72px;height:26px;line-height:27px;text-align:left;padding-left:47px;">子</div>
<div class="c" style="left:424px;top:439px;width:36px;height:26px;line-height:27px;color:#0000e0;">M020</div>
<div class="c" style="left:461px;top:439px;width:90px;height:26px;line-height:27px;color:#1f2f8f;text-align:left;padding-left:3px;">CD21080715_...</div>
<div class="c" style="left:661px;top:439px;width:54px;height:26px;line-height:27px;">y3132</div>
<div class="c" style="left:771px;top:439px;width:45px;height:26px;line-height:27px;">工程部</div>
<div class="c" style="left:817px;top:439px;width:45px;height:26px;line-height:27px;">2</div>
<div class="c" style="left:863px;top:439px;width:36px;height:26px;line-height:27px;">11/26</div>
<div class="c" style="left:900px;top:439px;width:36px;height:26px;line-height:27px;">11/27</div>
<div class="c" style="left:937px;top:439px;width:54px;height:26px;line-height:27px;color:#ff0000;text-align:left;padding-left:3px;">24小时...</div>
<div class="c" style="left:992px;top:439px;width:54px;height:26px;line-height:27px;color:#ff9a1f;">逾期20天</div>
<div class="c" style="left:1047px;top:439px;width:41px;height:26px;line-height:27px;">8</div>
<div class="c" style="left:1182px;top:439px;width:50px;height:26px;line-height:27px;">¥ 200</div>
<div class="c" style="left:1233px;top:439px;width:41px;height:26px;line-height:27px;">0.111</div>
<div class="c" style="left:1275px;top:439px;width:54px;height:26px;line-height:27px;">铝基板</div>
<div class="c" style="left:1330px;top:439px;width:32px;height:26px;line-height:27px;text-align:left;padding-left:5.5px;">2.0W</div>
<div class="ck" style="left:187px;top:470px"></div>
<div class="c" style="left:208px;top:466px;width:41px;height:26px;line-height:27px;">2398</div>
<div class="bd" style="left:257px;top:470px;background:#ff5722">样板</div>
<div class="c" style="left:351px;top:466px;width:72px;height:26px;line-height:27px;text-align:left;padding-left:47px;">升...</div>
<div class="c" style="left:424px;top:466px;width:36px;height:26px;line-height:27px;color:#0000e0;">M163</div>
<div class="c" style="left:461px;top:466px;width:90px;height:26px;line-height:27px;color:#1f2f8f;text-align:left;padding-left:3px;">KF020-HZYDD...</div>
<div class="c" style="left:552px;top:466px;width:108px;height:26px;line-height:27px;">双面字符</div>
<div class="c" style="left:661px;top:466px;width:54px;height:26px;line-height:27px;">y3130</div>
<div class="c" style="left:771px;top:466px;width:45px;height:26px;line-height:27px;">工程部</div>
<div class="c" style="left:817px;top:466px;width:45px;height:26px;line-height:27px;">6</div>
<div class="c" style="left:863px;top:466px;width:36px;height:26px;line-height:27px;">11/26</div>
<div class="c" style="left:900px;top:466px;width:36px;height:26px;line-height:27px;">11/27</div>
<div class="c" style="left:937px;top:466px;width:54px;height:26px;line-height:27px;color:#ff0000;text-align:left;padding-left:3px;">24小时...</div>
<div class="c" style="left:992px;top:466px;width:54px;height:26px;line-height:27px;color:#ff9a1f;">逾期20天</div>
<div class="c" style="left:1047px;top:466px;width:41px;height:26px;line-height:27px;">10</div>
<div class="c" style="left:1182px;top:466px;width:50px;height:26px;line-height:27px;">¥ 429</div>
<div class="c" style="left:1233px;top:466px;width:41px;height:26px;line-height:27px;">0.299</div>
<div class="c" style="left:1275px;top:466px;width:54px;height:26px;line-height:27px;">FR-4</div>
<div class="ck" style="left:187px;top:497px"></div>
<div class="c" style="left:208px;top:493px;width:41px;height:26px;line-height:27px;">2397</div>
<div class="bd" style="left:257px;top:497px;background:#2f3542">批量</div>
<div class="c" style="left:351px;top:493px;width:72px;height:26px;line-height:27px;text-align:left;padding-left:47px;">峰</div>
<div class="c" style="left:424px;top:493px;width:36px;height:26px;line-height:27px;color:#0000e0;">F039</div>
<div class="c" style="left:461px;top:493px;width:90px;height:26px;line-height:27px;color:#1f2f8f;">FR8080-A1.zip</div>
<div class="c" style="left:552px;top:493px;width:108px;height:26px;line-height:27px;">改周期 加急</div>
<div class="c" style="left:661px;top:493px;width:54px;height:26px;line-height:27px;">p3021</div>
<div class="c" style="left:771px;top:493px;width:45px;height:26px;line-height:27px;">下单</div>
<div class="c" style="left:863px;top:493px;width:36px;height:26px;line-height:27px;">11/26</div>
<div class="c" style="left:900px;top:493px;width:36px;height:26px;line-height:27px;">11/30</div>
<div class="c" style="left:992px;top:493px;width:54px;height:26px;line-height:27px;color:#ff9a1f;">逾期17天</div>
<div class="c" style="left:1047px;top:493px;width:41px;height:26px;line-height:27px;">2300</div>
<div class="c" style="left:1182px;top:493px;width:50px;height:26px;line-height:27px;">¥ 4232</div>
<div class="c" style="left:1233px;top:493px;width:41px;height:26px;line-height:27px;">19.237</div>
<div class="c" style="left:1275px;top:493px;width:54px;height:26px;line-height:27px;">FR-4</div>
<div class="ck" style="left:187px;top:524px"></div>
<div class="c" style="left:208px;top:520px;width:41px;height:26px;line-height:27px;">2396</div>
<div class="bd" style="left:257px;top:524px;background:#ff5722">样板</div>
<div class="c" style="left:351px;top:520px;width:72px;height:26px;line-height:27px;text-align:left;padding-left:47px;">萍</div>
<div class="c" style="left:424px;top:520px;width:36px;height:26px;line-height:27px;color:#0000e0;">M088</div>
<div class="c" style="left:461px;top:520px;width:90px;height:26px;line-height:27px;color:#1f2f8f;text-align:left;padding-left:3px;">2-300W投光反...</div>
<div class="c" style="left:661px;top:520px;width:54px;height:26px;line-height:27px;">y3124</div>
<div class="c" style="left:771px;top:520px;width:45px;height:26px;line-height:27px;">工程部</div>
<div class="c" style="left:817px;top:520px;width:45px;height:26px;line-height:27px;">1</div>
<div class="c" style="left:863px;top:520px;width:36px;height:26px;line-height:27px;">11/25</div>
<div class="c" style="left:900px;top:520px;width:36px;height:26px;line-height:27px;">11/29</div>
<div class="c" style="left:992px;top:520px;width:54px;height:26px;line-height:27px;color:#ff9a1f;">逾期18天</div>
<div class="c" style="left:1047px;top:520px;width:41px;height:26px;line-height:27px;">5</div>
<div class="c" style="left:1182px;top:520px;width:50px;height:26px;line-height:27px;">¥ 200</div>
<div class="c" style="left:1233px;top:520px;width:41px;height:26px;line-height:27px;">0.459</div>
<div class="c" style="left:1275px;top:520px;width:54px;height:26px;line-height:27px;">铝基板</div>
<div class="c" style="left:1330px;top:520px;width:32px;height:26px;line-height:27px;text-align:left;padding-left:5.5px;">1.0W</div>
<div class="ck" style="left:187px;top:551px"></div>
<div class="c" style="left:208px;top:547px;width:41px;height:26px;line-height:27px;">2395</div>
<div class="bd" style="left:257px;top:551px;background:#ff5722">样板</div>
<div class="c" style="left:351px;top:547px;width:72px;height:26px;line-height:27px;text-align:left;padding-left:47px;">升...</div>
<div class="c" style="left:424px;top:547px;width:36px;height:26px;line-height:27px;color:#0000e0;">M163</div>
<div class="c" style="left:461px;top:547px;width:90px;height:26px;line-height:27px;color:#1f2f8f;text-align:left;padding-left:3px;">KF020-HZYPA...</div>
<div class="c" style="left:552px;top:547px;width:108px;height:26px;line-height:27px;text-align:left;padding-left:3px;">按客户图纸拼版左...</div>
<div class="c" style="left:661px;top:547px;width:54px;height:26px;line-height:27px;">y3129</div>
<div class="c" style="left:716px;top:547px;width:54px;height:26px;line-height:27px;">hp0392</div>
<div class="c" style="left:771px;top:547px;width:45px;height:26px;line-height:27px;">工程部</div>
<div class="c" style="left:817px;top:547px;width:45px;height:26px;line-height:27px;">6</div>
<div class="c" style="left:863px;top:547px;width:36px;height:26px;line-height:27px;">11/25</div>
<div class="c" style="left:900px;top:547px;width:36px;height:26px;line-height:27px;">11/29</div>
<div class="c" style="left:992px;top:547px;width:54px;height:26px;line-height:27px;color:#ff9a1f;">逾期18天</div>
<div class="c" style="left:1047px;top:547px;width:41px;height:26px;line-height:27px;">20</div>
<div class="c" style="left:1182px;top:547px;width:50px;height:26px;line-height:27px;">¥ 185</div>
<div class="c" style="left:1233px;top:547px;width:41px;height:26px;line-height:27px;">0.298</div>
<div class="c" style="left:1275px;top:547px;width:54px;height:26px;line-height:27px;">铝基板</div>
<div class="c" style="left:1330px;top:547px;width:32px;height:26px;line-height:27px;text-align:left;padding-left:5.5px;">1.0W</div>
<div class="ck" style="left:187px;top:578px"></div>
<div class="c" style="left:208px;top:574px;width:41px;height:26px;line-height:27px;">2394</div>
<div class="bd" style="left:257px;top:578px;background:#2f3542">批量</div>
<div class="c" style="left:351px;top:574px;width:72px;height:26px;line-height:27px;text-align:left;padding-left:47px;">光电</div>
<div class="c" style="left:424px;top:574px;width:36px;height:26px;line-height:27px;color:#0000e0;">F150</div>
<div class="c" style="left:461px;top:574px;width:90px;height:26px;line-height:27px;color:#1f2f8f;text-align:left;padding-left:3px;">802-238-HX85-...</div>
<div class="c" style="left:552px;top:574px;width:108px;height:26px;line-height:27px;">激光V穿板</div>
<div class="c" style="left:661px;top:574px;width:54px;height:26px;line-height:27px;">p2691</div>
<div class="c" style="left:771px;top:574px;width:45px;height:26px;line-height:27px;">生产中</div>
<div class="c" style="left:817px;top:574px;width:45px;height:26px;line-height:27px;">1</div>
<div class="c" style="left:863px;top:574px;width:36px;height:26px;line-height:27px;">11/25</div>
<div class="c" style="left:900px;top:574px;width:36px;height:26px;line-height:27px;">12/02</div>
<div class="c" style="left:992px;top:574px;width:54px;height:26px;line-height:27px;color:#ff9a1f;">逾期15天</div>
<div class="c" style="left:1047px;top:574px;width:41px;height:26px;line-height:27px;">5000</div>
<div class="c" style="left:1182px;top:574px;width:50px;height:26px;line-height:27px;">¥ 4100</div>
<div class="c" style="left:1233px;top:574px;width:41px;height:26px;line-height:27px;">13.529</div>
<div class="c" style="left:1275px;top:574px;width:54px;height:26px;line-height:27px;">铝基板</div>
<div class="c" style="left:1330px;top:574px;width:32px;height:26px;line-height:27px;text-align:left;padding-left:5.5px;">1.0W</div>
<div class="ck" style="left:187px;top:605px"></div>
<div class="c" style="left:208px;top:601px;width:41px;height:26px;line-height:27px;">2393</div>
<div class="bd" style="left:257px;top:605px;background:#ff5722">样板</div>
<div class="c" style="left:351px;top:601px;width:72px;height:26px;line-height:27px;text-align:left;padding-left:47px;">源</div>
<div class="c" style="left:424px;top:601px;width:36px;height:26px;line-height:27px;color:#0000e0;">F175</div>
<div class="c" style="left:461px;top:601px;width:90px;height:26px;line-height:27px;color:#1f2f8f;text-align:left;padding-left:3px;">DOJ.E215.101...</div>
<div class="c" style="left:552px;top:601px;width:108px;height:26px;line-height:27px;">V穿 加UL 周期</div>
<div class="c" style="left:661px;top:601px;width:54px;height:26px;line-height:27px;">y3123</div>
<div class="c" style="left:771px;top:601px;width:45px;height:26px;line-height:27px;">生产中</div>
<div class="c" style="left:817px;top:601px;width:45px;height:26px;line-height:27px;">1</div>
<div class="c" style="left:863px;top:601px;width:36px;height:26px;line-height:27px;">11/25</div>
<div class="c" style="left:900px;top:601px;width:36px;height:26px;line-height:27px;">11/27</div>
<div class="c" style="left:937px;top:601px;width:54px;height:26px;line-height:27px;color:#ff0000;text-align:left;padding-left:3px;">48小时...</div>
<div class="c" style="left:992px;top:601px;width:54px;height:26px;line-height:27px;color:#ff9a1f;">逾期20天</div>
<div class="c" style="left:1047px;top:601px;width:41px;height:26px;line-height:27px;">30</div>
<div class="c" style="left:1182px;top:601px;width:50px;height:26px;line-height:27px;">¥ 150</div>
<div class="c" style="left:1233px;top:601px;width:41px;height:26px;line-height:27px;">0.079</div>
<div class="c" style="left:1275px;top:601px;width:54px;height:26px;line-height:27px;">铝基板</div>
<div class="c" style="left:1330px;top:601px;width:32px;height:26px;line-height:27px;text-align:left;padding-left:5.5px;">1.0W</div>
<div class="ck" style="left:187px;top:632px"></div>
<div class="c" style="left:208px;top:628px;width:41px;height:26px;line-height:27px;">2392</div>
<div class="bd" style="left:257px;top:632px;background:#ff5722">样板</div>
<div class="c" style="left:351px;top:628px;width:72px;height:26px;line-height:27px;text-align:left;padding-left:47px;">升...</div>
<div class="c" style="left:424px;top:628px;width:36px;height:26px;line-height:27px;color:#0000e0;">M163</div>
<div class="c" style="left:461px;top:628px;width:90px;height:26px;line-height:27px;color:#1f2f8f;text-align:left;padding-left:3px;">KF020-HDD20...</div>
<div class="c" style="left:661px;top:628px;width:54px;height:26px;line-height:27px;">y3128</div>
<div class="c" style="left:716px;top:628px;width:54px;height:26px;line-height:27px;">hp0392</div>
<div class="c" style="left:771px;top:628px;width:45px;height:26px;line-height:27px;">生产中</div>
<div class="c" style="left:817px;top:628px;width:45px;height:26px;line-height:27px;">6</div>
<div class="c" style="left:863px;top:628px;width:36px;height:26px;line-height:27px;">11/25</div>
<div class="c" style="left:900px;top:628px;width:36px;height:26px;line-height:27px;">11/29</div>
<div class="c" style="left:992px;top:628px;width:54px;height:26px;line-height:27px;color:#ff9a1f;">逾期18天</div>
<div class="c" style="left:1047px;top:628px;width:41px;height:26px;line-height:27px;">10</div>
<div class="c" style="left:1182px;top:628px;width:50px;height:26px;line-height:27px;">¥ 153</div>
<div class="c" style="left:1233px;top:628px;width:41px;height:26px;line-height:27px;">0.113</div>
<div class="c" style="left:1275px;top:628px;width:54px;height:26px;line-height:27px;">铝基板</div>
<div class="c" style="left:1330px;top:628px;width:32px;height:26px;line-height:27px;text-align:left;padding-left:5.5px;">1.0W</div>
<div class="ck" style="left:187px;top:659px"></div>
<div class="c" style="left:208px;top:655px;width:41px;height:26px;line-height:27px;">2391</div>
<div class="bd" style="left:257px;top:659px;background:#ff5722">样板</div>
<div class="c" style="left:351px;top:655px;width:72px;height:26px;line-height:27px;text-align:left;padding-left:47px;">升...</div>
<div class="c" style="left:424px;top:655px;width:36px;height:26px;line-height:27px;color:#0000e0;">M163</div>
<div class="c" style="left:461px;top:655px;width:90px;height:26px;line-height:27px;color:#1f2f8f;text-align:left;padding-left:3px;">KF020-HPM01...</div>
<div class="c" style="left:661px;top:655px;width:54px;height:26px;line-height:27px;">y3127</div>
<div class="c" style="left:716px;top:655px;width:54px;height:26px;line-height:27px;">hp0391</div>
<div class="c" style="left:771px;top:655px;width:45px;height:26px;line-height:27px;">生产中</div>
<div class="c" style="left:817px;top:655px;width:45px;height:26px;line-height:27px;">6</div>
<div class="c" style="left:863px;top:655px;width:36px;height:26px;line-height:27px;">11/25</div>
<div class="c" style="left:900px;top:655px;width:36px;height:26px;line-height:27px;">11/29</div>
<div class="c" style="left:992px;top:655px;width:54px;height:26px;line-height:27px;color:#ff9a1f;">逾期18天</div>
<div class="c" style="left:1047px;top:655px;width:41px;height:26px;line-height:27px;">10</div>
<div class="c" style="left:1182px;top:655px;width:50px;height:26px;line-height:27px;">¥ 262</div>
<div class="c" style="left:1233px;top:655px;width:41px;height:26px;line-height:27px;">0.328</div>
<div class="c" style="left:1275px;top:655px;width:54px;height:26px;line-height:27px;">FR-4</div>
<div class="vl" style="left:183px;top:275px;height:408px"></div>
<div class="vl" style="left:207px;top:275px;height:408px"></div>
<div class="vl" style="left:249px;top:275px;height:408px"></div>
<div class="vl" style="left:295px;top:275px;height:408px"></div>
<div class="vl" style="left:350px;top:275px;height:408px"></div>
<div class="vl" style="left:423px;top:275px;height:408px"></div>
<div class="vl" style="left:460px;top:275px;height:408px"></div>
<div class="vl" style="left:551px;top:275px;height:408px"></div>
<div class="vl" style="left:660px;top:275px;height:408px"></div>
<div class="vl" style="left:715px;top:275px;height:408px"></div>
<div class="vl" style="left:770px;top:275px;height:408px"></div>
<div class="vl" style="left:816px;top:275px;height:408px"></div>
<div class="vl" style="left:862px;top:275px;height:408px"></div>
<div class="vl" style="left:899px;top:275px;height:408px"></div>
<div class="vl" style="left:936px;top:275px;height:408px"></div>
<div class="vl" style="left:991px;top:275px;height:408px"></div>
<div class="vl" style="left:1046px;top:275px;height:408px"></div>
<div class="vl" style="left:1088px;top:275px;height:408px"></div>
<div class="vl" style="left:1139px;top:275px;height:408px"></div>
<div class="vl" style="left:1181px;top:275px;height:408px"></div>
<div class="vl" style="left:1232px;top:275px;height:408px"></div>
<div class="vl" style="left:1274px;top:275px;height:408px"></div>
<div class="vl" style="left:1329px;top:275px;height:408px"></div>
<div class="hl" style="left:183px;top:275px;width:1352px"></div>
<div class="hl" style="left:183px;top:303px;width:1179px"></div>
<div class="hl" style="left:183px;top:330px;width:1179px"></div>
<div class="hl" style="left:183px;top:357px;width:1179px"></div>
<div class="hl" style="left:183px;top:384px;width:1179px"></div>
<div class="hl" style="left:183px;top:411px;width:1179px"></div>
<div class="hl" style="left:183px;top:438px;width:1179px"></div>
<div class="hl" style="left:183px;top:465px;width:1179px"></div>
<div class="hl" style="left:183px;top:492px;width:1179px"></div>
<div class="hl" style="left:183px;top:519px;width:1179px"></div>
<div class="hl" style="left:183px;top:546px;width:1179px"></div>
<div class="hl" style="left:183px;top:573px;width:1179px"></div>
<div class="hl" style="left:183px;top:600px;width:1179px"></div>
<div class="hl" style="left:183px;top:627px;width:1179px"></div>
<div class="hl" style="left:183px;top:654px;width:1179px"></div>
<div class="hl" style="left:183px;top:681px;width:1179px"></div>
<svg class="a" style="left:0;top:0" width="1552" height="683"><path d="M312 330V313Q312 301 324 301Q336 301 336 313V330H345V683H299V330Z" fill="#f6f6f6" fill-opacity=".97"/><path d="M359 325Q359 301 383 301Q407 301 407 325V340L403 392L398 424L395 459V683H347V470L350 424L357 383Z" fill="#f5f5f5" fill-opacity=".97"/></svg>
<div class="a" style="left:312px;top:304px;width:12px;height:22px;background:rgb(228,228,230)"></div>
<div class="a" style="left:324px;top:304px;width:12px;height:22px;background:rgb(228,228,230)"></div>
<div class="a" style="left:372px;top:304px;width:12px;height:22px;background:rgb(232,232,234)"></div>
<div class="a" style="left:384px;top:304px;width:12px;height:22px;background:rgb(240,240,242)"></div>
<div class="a" style="left:396px;top:304px;width:12px;height:22px;background:rgb(240,240,242)"></div>
<div class="a" style="left:312px;top:338px;width:12px;height:11px;background:rgb(204,204,206)"></div>
<div class="a" style="left:324px;top:338px;width:12px;height:11px;background:rgb(210,210,212)"></div>
<div class="a" style="left:300px;top:338px;width:12px;height:11px;background:rgb(250,250,250)"></div>
<div class="a" style="left:336px;top:338px;width:12px;height:11px;background:rgb(236,236,236)"></div>
<div class="a" style="left:372px;top:338px;width:12px;height:11px;background:rgb(222,222,224)"></div>
<div class="a" style="left:384px;top:338px;width:12px;height:11px;background:rgb(188,188,190)"></div>
<div class="a" style="left:396px;top:338px;width:12px;height:11px;background:rgb(218,218,220)"></div>
<div class="a" style="left:312px;top:365px;width:12px;height:11px;background:rgb(210,210,212)"></div>
<div class="a" style="left:324px;top:365px;width:12px;height:11px;background:rgb(222,222,224)"></div>
<div class="a" style="left:300px;top:365px;width:12px;height:11px;background:rgb(240,240,240)"></div>
<div class="a" style="left:336px;top:365px;width:12px;height:11px;background:rgb(240,240,240)"></div>
<div class="a" style="left:372px;top:365px;width:12px;height:11px;background:rgb(218,218,220)"></div>
<div class="a" style="left:384px;top:365px;width:12px;height:11px;background:rgb(222,222,224)"></div>
<div class="a" style="left:396px;top:365px;width:12px;height:11px;background:rgb(222,222,224)"></div>
<div class="a" style="left:312px;top:392px;width:12px;height:11px;background:rgb(216,216,218)"></div>
<div class="a" style="left:324px;top:392px;width:12px;height:11px;background:rgb(216,216,218)"></div>
<div class="a" style="left:300px;top:392px;width:12px;height:11px;background:rgb(240,240,240)"></div>
<div class="a" style="left:336px;top:392px;width:12px;height:11px;background:rgb(240,240,240)"></div>
<div class="a" style="left:372px;top:392px;width:12px;height:11px;background:rgb(204,204,206)"></div>
<div class="a" style="left:384px;top:392px;width:12px;height:11px;background:rgb(222,222,224)"></div>
<div class="a" style="left:396px;top:392px;width:12px;height:11px;background:rgb(218,218,220)"></div>
<div class="a" style="left:312px;top:419px;width:12px;height:11px;background:rgb(198,198,200)"></div>
<div class="a" style="left:324px;top:419px;width:12px;height:11px;background:rgb(198,198,200)"></div>
<div class="a" style="left:300px;top:419px;width:12px;height:11px;background:rgb(240,240,240)"></div>
<div class="a" style="left:336px;top:419px;width:12px;height:11px;background:rgb(236,236,236)"></div>
<div class="a" style="left:362px;top:419px;width:12px;height:11px;background:rgb(220,220,222)"></div>
<div class="a" style="left:374px;top:419px;width:12px;height:11px;background:rgb(204,204,206)"></div>
<div class="a" style="left:386px;top:419px;width:12px;height:11px;background:rgb(220,220,222)"></div>
<div class="a" style="left:312px;top:446px;width:12px;height:11px;background:rgb(216,216,218)"></div>
<div class="a" style="left:324px;top:446px;width:12px;height:11px;background:rgb(222,222,224)"></div>
<div class="a" style="left:300px;top:446px;width:12px;height:11px;background:rgb(250,250,250)"></div>
<div class="a" style="left:336px;top:446px;width:12px;height:11px;background:rgb(250,250,250)"></div>
<div class="a" style="left:362px;top:446px;width:12px;height:11px;background:rgb(226,226,228)"></div>
<div class="a" style="left:374px;top:446px;width:12px;height:11px;background:rgb(230,230,232)"></div>
<div class="a" style="left:386px;top:446px;width:12px;height:11px;background:rgb(226,226,228)"></div>
<div class="a" style="left:312px;top:473px;width:12px;height:11px;background:rgb(204,204,206)"></div>
<div class="a" style="left:324px;top:473px;width:12px;height:11px;background:rgb(210,210,212)"></div>
<div class="a" style="left:300px;top:473px;width:12px;height:11px;background:rgb(236,236,236)"></div>
<div class="a" style="left:336px;top:473px;width:12px;height:11px;background:rgb(236,236,236)"></div>
<div class="a" style="left:349px;top:473px;width:12px;height:11px;background:rgb(212,212,214)"></div>
<div class="a" style="left:361px;top:473px;width:12px;height:11px;background:rgb(226,226,228)"></div>
<div class="a" style="left:373px;top:473px;width:12px;height:11px;background:rgb(212,212,214)"></div>
<div class="a" style="left:385px;top:473px;width:12px;height:11px;background:rgb(220,220,222)"></div>
<div class="a" style="left:312px;top:500px;width:12px;height:11px;background:rgb(216,216,218)"></div>
<div class="a" style="left:324px;top:500px;width:12px;height:11px;background:rgb(210,210,212)"></div>
<div class="a" style="left:300px;top:500px;width:12px;height:11px;background:rgb(250,250,250)"></div>
<div class="a" style="left:336px;top:500px;width:12px;height:11px;background:rgb(250,250,250)"></div>
<div class="a" style="left:349px;top:500px;width:12px;height:11px;background:rgb(230,230,232)"></div>
<div class="a" style="left:361px;top:500px;width:12px;height:11px;background:rgb(220,220,222)"></div>
<div class="a" style="left:373px;top:500px;width:12px;height:11px;background:rgb(230,230,232)"></div>
<div class="a" style="left:385px;top:500px;width:12px;height:11px;background:rgb(230,230,232)"></div>
<div class="a" style="left:312px;top:527px;width:12px;height:11px;background:rgb(216,216,218)"></div>
<div class="a" style="left:324px;top:527px;width:12px;height:11px;background:rgb(222,222,224)"></div>
<div class="a" style="left:300px;top:527px;width:12px;height:11px;background:rgb(240,240,240)"></div>
<div class="a" style="left:336px;top:527px;width:12px;height:11px;background:rgb(244,244,244)"></div>
<div class="a" style="left:349px;top:527px;width:12px;height:11px;background:rgb(204,204,206)"></div>
<div class="a" style="left:361px;top:527px;width:12px;height:11px;background:rgb(220,220,222)"></div>
<div class="a" style="left:373px;top:527px;width:12px;height:11px;background:rgb(230,230,232)"></div>
<div class="a" style="left:385px;top:527px;width:12px;height:11px;background:rgb(212,212,214)"></div>
<div class="a" style="left:312px;top:554px;width:12px;height:11px;background:rgb(210,210,212)"></div>
<div class="a" style="left:324px;top:554px;width:12px;height:11px;background:rgb(222,222,224)"></div>
<div class="a" style="left:300px;top:554px;width:12px;height:11px;background:rgb(236,236,236)"></div>
<div class="a" style="left:336px;top:554px;width:12px;height:11px;background:rgb(240,240,240)"></div>
<div class="a" style="left:349px;top:554px;width:12px;height:11px;background:rgb(230,230,232)"></div>
<div class="a" style="left:361px;top:554px;width:12px;height:11px;background:rgb(220,220,222)"></div>
<div class="a" style="left:373px;top:554px;width:12px;height:11px;background:rgb(220,220,222)"></div>
<div class="a" style="left:385px;top:554px;width:12px;height:11px;background:rgb(204,204,206)"></div>
<div class="a" style="left:312px;top:581px;width:12px;height:11px;background:rgb(198,198,200)"></div>
<div class="a" style="left:324px;top:581px;width:12px;height:11px;background:rgb(216,216,218)"></div>
<div class="a" style="left:300px;top:581px;width:12px;height:11px;background:rgb(250,250,250)"></div>
<div class="a" style="left:336px;top:581px;width:12px;height:11px;background:rgb(236,236,236)"></div>
<div class="a" style="left:349px;top:581px;width:12px;height:11px;background:rgb(220,220,222)"></div>
<div class="a" style="left:361px;top:581px;width:12px;height:11px;background:rgb(204,204,206)"></div>
<div class="a" style="left:373px;top:581px;width:12px;height:11px;background:rgb(226,226,228)"></div>
<div class="a" style="left:385px;top:581px;width:12px;height:11px;background:rgb(212,212,214)"></div>
<div class="a" style="left:312px;top:608px;width:12px;height:11px;background:rgb(198,198,200)"></div>
<div class="a" style="left:324px;top:608px;width:12px;height:11px;background:rgb(210,210,212)"></div>
<div class="a" style="left:300px;top:608px;width:12px;height:11px;background:rgb(250,250,250)"></div>
<div class="a" style="left:336px;top:608px;width:12px;height:11px;background:rgb(250,250,250)"></div>
<div class="a" style="left:349px;top:608px;width:12px;height:11px;background:rgb(204,204,206)"></div>
<div class="a" style="left:361px;top:608px;width:12px;height:11px;background:rgb(204,204,206)"></div>
<div class="a" style="left:373px;top:608px;width:12px;height:11px;background:rgb(230,230,232)"></div>
<div class="a" style="left:385px;top:608px;width:12px;height:11px;background:rgb(230,230,232)"></div>
<div class="a" style="left:312px;top:635px;width:12px;height:11px;background:rgb(198,198,200)"></div>
<div class="a" style="left:324px;top:635px;width:12px;height:11px;background:rgb(216,216,218)"></div>
<div class="a" style="left:300px;top:635px;width:12px;height:11px;background:rgb(244,244,244)"></div>
<div class="a" style="left:336px;top:635px;width:12px;height:11px;background:rgb(244,244,244)"></div>
<div class="a" style="left:349px;top:635px;width:12px;height:11px;background:rgb(230,230,232)"></div>
<div class="a" style="left:361px;top:635px;width:12px;height:11px;background:rgb(212,212,214)"></div>
<div class="a" style="left:373px;top:635px;width:12px;height:11px;background:rgb(204,204,206)"></div>
<div class="a" style="left:385px;top:635px;width:12px;height:11px;background:rgb(220,220,222)"></div>
<div class="a" style="left:312px;top:662px;width:12px;height:11px;background:rgb(198,198,200)"></div>
<div class="a" style="left:324px;top:662px;width:12px;height:11px;background:rgb(198,198,200)"></div>
<div class="a" style="left:300px;top:662px;width:12px;height:11px;background:rgb(236,236,236)"></div>
<div class="a" style="left:336px;top:662px;width:12px;height:11px;background:rgb(236,236,236)"></div>
<div class="a" style="left:349px;top:662px;width:12px;height:11px;background:rgb(212,212,214)"></div>
<div class="a" style="left:361px;top:662px;width:12px;height:11px;background:rgb(226,226,228)"></div>
<div class="a" style="left:373px;top:662px;width:12px;height:11px;background:rgb(220,220,222)"></div>
<div class="a" style="left:385px;top:662px;width:12px;height:11px;background:rgb(230,230,232)"></div>
<div class="a" style="left:1357px;top:275px;width:5px;height:408px;background:linear-gradient(to right,rgba(0,0,0,0),rgba(0,0,0,.10))"></div>
<div class="a" style="left:1362px;top:275px;width:173px;height:408px;background:#fff"></div>
<div class="a" style="left:1362px;top:275px;width:173px;height:28px;background:#f2f2f2"></div>
<div class="vl" style="left:1362px;top:275px;height:408px"></div>
<div class="hl" style="left:1362px;top:275px;width:173px"></div>
<div class="hl" style="left:1362px;top:302px;width:173px;height:2px"></div>
<div class="hl" style="left:1362px;top:330px;width:173px"></div>
<div class="hl" style="left:1362px;top:357px;width:173px"></div>
<div class="hl" style="left:1362px;top:384px;width:173px"></div>
<div class="hl" style="left:1362px;top:411px;width:173px"></div>
<div class="hl" style="left:1362px;top:438px;width:173px"></div>
<div class="hl" style="left:1362px;top:465px;width:173px"></div>
<div class="hl" style="left:1362px;top:492px;width:173px"></div>
<div class="hl" style="left:1362px;top:519px;width:173px"></div>
<div class="hl" style="left:1362px;top:546px;width:173px"></div>
<div class="hl" style="left:1362px;top:573px;width:173px"></div>
<div class="hl" style="left:1362px;top:600px;width:173px"></div>
<div class="hl" style="left:1362px;top:627px;width:173px"></div>
<div class="hl" style="left:1362px;top:654px;width:173px"></div>
<div class="hl" style="left:1362px;top:681px;width:173px"></div>
<div class="h" style="left:1363px;top:276px;width:171px;height:26px;line-height:25px">操作</div>
<div class="vb" style="left:1366px;top:308px;width:45px;background:#009688"><svg class="a" style="left:4px;top:2px" width="14" height="14" viewBox="0 0 14 14"><circle cx="5.8" cy="5.8" r="4.5" fill="none" stroke="#eafaf7" stroke-width="1"/><path d="M3.4 7.2A2.8 2.8 0 0 1 4.4 3.6" fill="none" stroke="#d8f2ee" stroke-width="0.8"/><path d="M9.2 9.2L12.4 12.4" stroke="#f4fffd" stroke-width="1.7" stroke-linecap="round"/></svg><span style="position:absolute;left:19px;top:0">查看</span></div>
<div class="vb" style="left:1366px;top:335px;width:45px;background:#009688"><svg class="a" style="left:4px;top:2px" width="14" height="14" viewBox="0 0 14 14"><circle cx="5.8" cy="5.8" r="4.5" fill="none" stroke="#eafaf7" stroke-width="1"/><path d="M3.4 7.2A2.8 2.8 0 0 1 4.4 3.6" fill="none" stroke="#d8f2ee" stroke-width="0.8"/><path d="M9.2 9.2L12.4 12.4" stroke="#f4fffd" stroke-width="1.7" stroke-linecap="round"/></svg><span style="position:absolute;left:19px;top:0">查看</span></div>
<div class="vb" style="left:1366px;top:362px;width:45px;background:#009688"><svg class="a" style="left:4px;top:2px" width="14" height="14" viewBox="0 0 14 14"><circle cx="5.8" cy="5.8" r="4.5" fill="none" stroke="#eafaf7" stroke-width="1"/><path d="M3.4 7.2A2.8 2.8 0 0 1 4.4 3.6" fill="none" stroke="#d8f2ee" stroke-width="0.8"/><path d="M9.2 9.2L12.4 12.4" stroke="#f4fffd" stroke-width="1.7" stroke-linecap="round"/></svg><span style="position:absolute;left:19px;top:0">查看</span></div>
<div class="vb" style="left:1366px;top:389px;width:45px;background:#009688"><svg class="a" style="left:4px;top:2px" width="14" height="14" viewBox="0 0 14 14"><circle cx="5.8" cy="5.8" r="4.5" fill="none" stroke="#eafaf7" stroke-width="1"/><path d="M3.4 7.2A2.8 2.8 0 0 1 4.4 3.6" fill="none" stroke="#d8f2ee" stroke-width="0.8"/><path d="M9.2 9.2L12.4 12.4" stroke="#f4fffd" stroke-width="1.7" stroke-linecap="round"/></svg><span style="position:absolute;left:19px;top:0">查看</span></div>
<div class="vb" style="left:1366px;top:416px;width:45px;background:#009688"><svg class="a" style="left:4px;top:2px" width="14" height="14" viewBox="0 0 14 14"><circle cx="5.8" cy="5.8" r="4.5" fill="none" stroke="#eafaf7" stroke-width="1"/><path d="M3.4 7.2A2.8 2.8 0 0 1 4.4 3.6" fill="none" stroke="#d8f2ee" stroke-width="0.8"/><path d="M9.2 9.2L12.4 12.4" stroke="#f4fffd" stroke-width="1.7" stroke-linecap="round"/></svg><span style="position:absolute;left:19px;top:0">查看</span></div>
<div class="vb" style="left:1366px;top:443px;width:45px;background:#009688"><svg class="a" style="left:4px;top:2px" width="14" height="14" viewBox="0 0 14 14"><circle cx="5.8" cy="5.8" r="4.5" fill="none" stroke="#eafaf7" stroke-width="1"/><path d="M3.4 7.2A2.8 2.8 0 0 1 4.4 3.6" fill="none" stroke="#d8f2ee" stroke-width="0.8"/><path d="M9.2 9.2L12.4 12.4" stroke="#f4fffd" stroke-width="1.7" stroke-linecap="round"/></svg><span style="position:absolute;left:19px;top:0">查看</span></div>
<div class="vb" style="left:1366px;top:470px;width:45px;background:#009688"><svg class="a" style="left:4px;top:2px" width="14" height="14" viewBox="0 0 14 14"><circle cx="5.8" cy="5.8" r="4.5" fill="none" stroke="#eafaf7" stroke-width="1"/><path d="M3.4 7.2A2.8 2.8 0 0 1 4.4 3.6" fill="none" stroke="#d8f2ee" stroke-width="0.8"/><path d="M9.2 9.2L12.4 12.4" stroke="#f4fffd" stroke-width="1.7" stroke-linecap="round"/></svg><span style="position:absolute;left:19px;top:0">查看</span></div>
<div class="vb" style="left:1366px;top:497px;width:45px;background:#009688"><svg class="a" style="left:4px;top:2px" width="14" height="14" viewBox="0 0 14 14"><circle cx="5.8" cy="5.8" r="4.5" fill="none" stroke="#eafaf7" stroke-width="1"/><path d="M3.4 7.2A2.8 2.8 0 0 1 4.4 3.6" fill="none" stroke="#d8f2ee" stroke-width="0.8"/><path d="M9.2 9.2L12.4 12.4" stroke="#f4fffd" stroke-width="1.7" stroke-linecap="round"/></svg><span style="position:absolute;left:19px;top:0">查看</span></div>
<div class="vb" style="left:1419px;top:497px;width:31px;background:#1e9fff;text-align:center">生产</div>
<div class="vb" style="left:1366px;top:524px;width:45px;background:#009688"><svg class="a" style="left:4px;top:2px" width="14" height="14" viewBox="0 0 14 14"><circle cx="5.8" cy="5.8" r="4.5" fill="none" stroke="#eafaf7" stroke-width="1"/><path d="M3.4 7.2A2.8 2.8 0 0 1 4.4 3.6" fill="none" stroke="#d8f2ee" stroke-width="0.8"/><path d="M9.2 9.2L12.4 12.4" stroke="#f4fffd" stroke-width="1.7" stroke-linecap="round"/></svg><span style="position:absolute;left:19px;top:0">查看</span></div>
<div class="vb" style="left:1366px;top:551px;width:45px;background:#009688"><svg class="a" style="left:4px;top:2px" width="14" height="14" viewBox="0 0 14 14"><circle cx="5.8" cy="5.8" r="4.5" fill="none" stroke="#eafaf7" stroke-width="1"/><path d="M3.4 7.2A2.8 2.8 0 0 1 4.4 3.6" fill="none" stroke="#d8f2ee" stroke-width="0.8"/><path d="M9.2 9.2L12.4 12.4" stroke="#f4fffd" stroke-width="1.7" stroke-linecap="round"/></svg><span style="position:absolute;left:19px;top:0">查看</span></div>
<div class="vb" style="left:1366px;top:578px;width:45px;background:#009688"><svg class="a" style="left:4px;top:2px" width="14" height="14" viewBox="0 0 14 14"><circle cx="5.8" cy="5.8" r="4.5" fill="none" stroke="#eafaf7" stroke-width="1"/><path d="M3.4 7.2A2.8 2.8 0 0 1 4.4 3.6" fill="none" stroke="#d8f2ee" stroke-width="0.8"/><path d="M9.2 9.2L12.4 12.4" stroke="#f4fffd" stroke-width="1.7" stroke-linecap="round"/></svg><span style="position:absolute;left:19px;top:0">查看</span></div>
<div class="vb" style="left:1366px;top:605px;width:45px;background:#009688"><svg class="a" style="left:4px;top:2px" width="14" height="14" viewBox="0 0 14 14"><circle cx="5.8" cy="5.8" r="4.5" fill="none" stroke="#eafaf7" stroke-width="1"/><path d="M3.4 7.2A2.8 2.8 0 0 1 4.4 3.6" fill="none" stroke="#d8f2ee" stroke-width="0.8"/><path d="M9.2 9.2L12.4 12.4" stroke="#f4fffd" stroke-width="1.7" stroke-linecap="round"/></svg><span style="position:absolute;left:19px;top:0">查看</span></div>
<div class="vb" style="left:1366px;top:632px;width:45px;background:#009688"><svg class="a" style="left:4px;top:2px" width="14" height="14" viewBox="0 0 14 14"><circle cx="5.8" cy="5.8" r="4.5" fill="none" stroke="#eafaf7" stroke-width="1"/><path d="M3.4 7.2A2.8 2.8 0 0 1 4.4 3.6" fill="none" stroke="#d8f2ee" stroke-width="0.8"/><path d="M9.2 9.2L12.4 12.4" stroke="#f4fffd" stroke-width="1.7" stroke-linecap="round"/></svg><span style="position:absolute;left:19px;top:0">查看</span></div>
<div class="vb" style="left:1366px;top:659px;width:45px;background:#009688"><svg class="a" style="left:4px;top:2px" width="14" height="14" viewBox="0 0 14 14"><circle cx="5.8" cy="5.8" r="4.5" fill="none" stroke="#eafaf7" stroke-width="1"/><path d="M3.4 7.2A2.8 2.8 0 0 1 4.4 3.6" fill="none" stroke="#d8f2ee" stroke-width="0.8"/><path d="M9.2 9.2L12.4 12.4" stroke="#f4fffd" stroke-width="1.7" stroke-linecap="round"/></svg><span style="position:absolute;left:19px;top:0">查看</span></div>
<div class="a" style="left:182px;top:681px;width:1353px;height:2px;background:#ececec"></div>
<svg class="a" style="left:0;top:0;pointer-events:none" width="1552" height="683"><polygon points="115.2,165.1 194.6,301.3 197.7,298.5 197.4,316.2 182,306.7 186.4,305.9 113.9,165.9" fill="#ff1e12"/><polygon points="580.95,66.4 507.2,196.5 512.1,195.1 496.5,205.5 496.3,187.2 500.7,192.1 579.65,65.6" fill="#ff1e12"/></svg>
<div class="t" style="left:144.5px;top:264px;font-size:21.5px;line-height:24px;color:#ff2a1e">1</div>
<div class="t" style="left:549.5px;top:146px;font-size:21.5px;line-height:24px;color:#ff2a1e">2</div>
</body></html>
